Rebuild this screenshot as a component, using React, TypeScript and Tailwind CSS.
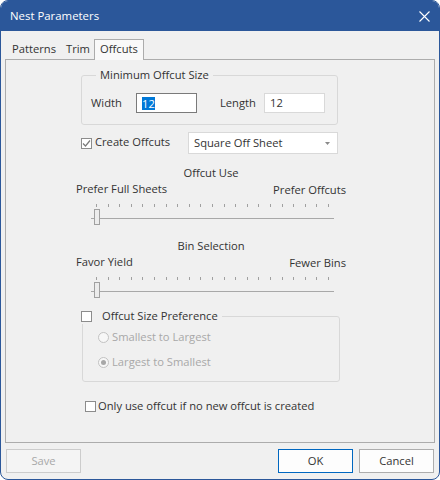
import React from 'react'

function Check({ checked }: { checked?: boolean }) {
  return (
    <span className="flex h-[11px] w-[11px] shrink-0 items-center justify-center border border-[#8c8c8c] bg-white">
      {checked && (
        <svg width="9" height="9" viewBox="0 0 9 9">
          <path d="M1 4.5 L3.5 7 L8 1.5" fill="none" stroke="#7a7a7a" strokeWidth="1.2" />
        </svg>
      )}
    </span>
  )
}

function Radio({ label, checked }: { label: string; checked?: boolean }) {
  return (
    <div className="flex h-[16px] items-center gap-[3px] text-[#a8a8a8]">
      <span className="flex h-[11px] w-[11px] items-center justify-center rounded-full border border-[#c2c2c2] bg-[#f7f7f7]">
        {checked && <span className="h-[5px] w-[5px] rounded-full bg-[#a8a8a8]" />}
      </span>
      {label}
    </div>
  )
}

function Slider() {
  return (
    <div className="relative h-[38px]">
      <div className="ml-[20px] flex w-[233px] justify-between pt-[7px]">
        {Array.from({ length: 21 }).map((_, i) => (
          <span key={i} className="h-[3px] w-px bg-[#a0a0a0]" />
        ))}
      </div>
      <div className="ml-[15px] mt-[11px] h-px w-[243px] bg-[#a8a8a8]" />
      <div className="absolute left-[18px] top-[12px] h-[16px] w-[6px] border border-[#a0a0a0] bg-[#ececec]" />
    </div>
  )
}

function SliderBlock({ title, left, right, className }: { title: string; left: string; right: string; className?: string }) {
  return (
    <div className={`-ml-[5px] w-[270px] ${className ?? ''}`}>
      <div className="h-[16px] text-center">{title}</div>
      <div className="flex h-[16px] justify-between">
        <span>{left}</span>
        <span className="pt-px">{right}</span>
      </div>
      <Slider />
    </div>
  )
}

export default function App() {
  return (
    <div className="h-[480px] w-[440px] bg-white font-['Open_Sans',sans-serif] text-[11.2px] leading-[16px] text-[#333]">
      <div className="flex h-full flex-col overflow-hidden rounded-[8px] border border-[#2b579a] bg-[#f0f0f0]">
        {/* title bar */}
        <div className="flex h-[30px] shrink-0 items-center justify-between bg-[#2b579a] pl-[9px] pr-[9px] text-[11.4px] text-white">
          <span>Nest Parameters</span>
          <svg width="11" height="11" viewBox="0 0 11 11">
            <path d="M0.5 0.5 L10.5 10.5 M10.5 0.5 L0.5 10.5" stroke="white" strokeWidth="1.1" />
          </svg>
        </div>

        {/* tabs */}
        <div className="flex h-[28px] shrink-0 items-end pl-[11px]">
          <span className="w-[54px] pb-[2px]">Patterns</span>
          <span className="w-[28px] pb-[2px]">Trim</span>
          <span className="relative z-10 -mb-px w-[50px] border border-b-0 border-[#acacac] bg-[#f9f9f9] pb-[3px] pt-px text-center">
            Offcuts
          </span>
        </div>

        {/* panel */}
        <div className="mx-[4px] h-[384px] shrink-0 border border-[#acacac] bg-[#f0f0f0]">
          <div className="ml-[75px] flex w-[257px] flex-col">
            <fieldset className="mt-[7px] rounded-[3px] border border-[#d8d8d8] pb-[11px] pl-[9px] pt-[10px]">
              <legend className="ml-[5px] px-[4px]">Minimum Offcut Size</legend>
              <div className="flex items-center">
                <span className="w-[45px]">Width</span>
                <div className="flex h-[20px] w-[61px] items-center border border-[#7a7a7a] bg-white pl-[5px]">
                  <span className="bg-[#0078d7] leading-[13px] text-white">12</span>
                </div>
                <span className="ml-[23px] w-[44px]">Length</span>
                <div className="flex h-[20px] w-[61px] items-center border border-[#d9d9d9] bg-white pl-[5px]">12</div>
              </div>
            </fieldset>

            <div className="mt-[7px] flex h-[22px] items-center justify-between">
              <div className="flex items-center gap-[3px]">
                <Check checked />
                <span className="-mt-[2px]">Create Offcuts</span>
              </div>
              <div className="flex h-[22px] w-[150px] items-center justify-between border border-[#d9d9d9] bg-white pl-[5px] pr-[7px]">
                <span>Square Off Sheet</span>
                <svg width="5" height="3" viewBox="0 0 5 3">
                  <path d="M0 0 H5 L2.5 3 Z" fill="#8a8a8a" />
                </svg>
              </div>
            </div>

            <SliderBlock className="mt-[11px]" title="Offcut Use" left="Prefer Full Sheets" right="Prefer Offcuts" />
            <SliderBlock className="mt-[3px]" title="Bin Selection" left="Favor Yield" right="Fewer Bins" />

            <fieldset className="ml-px w-[258px] rounded-[3px] border border-[#d8d8d8] pb-[11px] pt-[5px]">
              <legend className="-ml-[2px] flex items-center pr-[4px]">
                <Check />
                <span className="ml-[10px]">Offcut Size Preference</span>
              </legend>
              <div className="pl-[15px]">
                <Radio label="Smallest to Largest" />
                <div className="mt-[9px]">
                  <Radio label="Largest to Smallest" checked />
                </div>
              </div>
            </fieldset>

            <div className="ml-[4px] mt-[16px] flex h-[16px] items-center gap-[2px]">
              <Check />
              <span>Only use offcut if no new offcut is created</span>
            </div>
          </div>
        </div>

        {/* buttons */}
        <div className="mt-[6px] flex justify-between px-[5px]">
          <button className="h-[24px] w-[75px] border border-[#cccccc] bg-[#f4f4f4] text-[#a8a8a8]">Save</button>
          <div className="flex gap-[6px]">
            <button className="h-[24px] w-[75px] border border-[#0067c0] bg-[#fdfdfd]">OK</button>
            <button className="h-[24px] w-[75px] border border-[#adadad] bg-[#fdfdfd]">Cancel</button>
          </div>
        </div>
      </div>
    </div>
  )
}
